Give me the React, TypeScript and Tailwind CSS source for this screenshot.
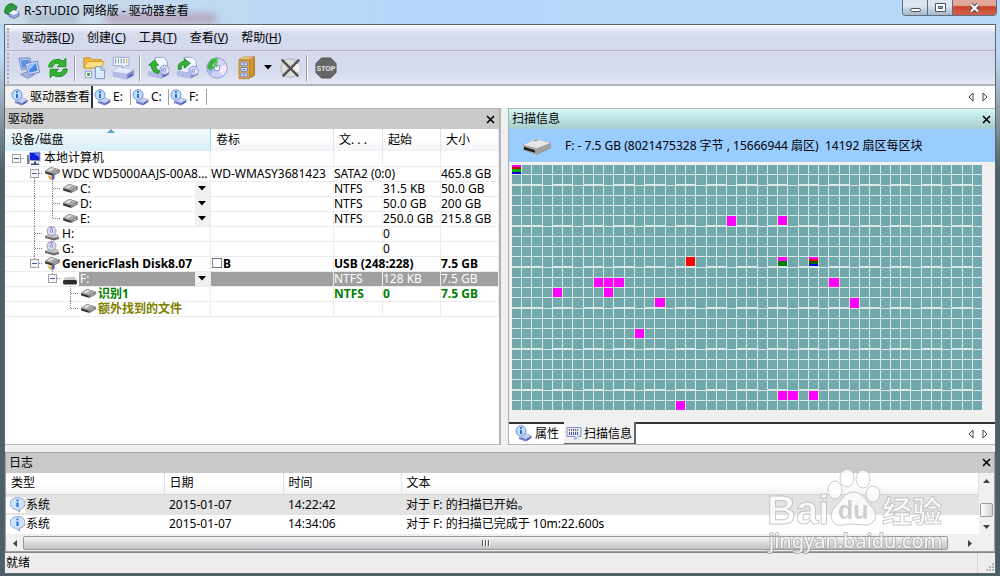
import React from "react";

interface TreeRow {
  /** 每一级的连线：空格 / | / T / L / - (展开按钮) */
  guides: string;
  icon: "pc" | "hdd" | "disk" | "cd" | "flash";
  name: string;
  label?: string;
  fs?: string;
  start?: string;
  size?: string;
  wide?: boolean;
  menu?: boolean;
  selected?: boolean;
  style?: string;
}

const rows: TreeRow[] = [
  { guides: "-", icon: "pc", name: "本地计算机" },
  { guides: " +", icon: "hdd", name: "WDC WD5000AAJS-00A8...", label: "WD-WMASY3681423", fs: "SATA2 (0:0)", size: "465.8 GB", wide: true },
  { guides: " |T", icon: "disk", name: "C:", fs: "NTFS", start: "31.5 KB", size: "50.0 GB", menu: true },
  { guides: " |T", icon: "disk", name: "D:", fs: "NTFS", start: "50.0 GB", size: "200 GB", menu: true },
  { guides: " |L", icon: "disk", name: "E:", fs: "NTFS", start: "250.0 GB", size: "215.8 GB", menu: true },
  { guides: " T", icon: "cd", name: "H:", start: "0" },
  { guides: " T", icon: "cd", name: "G:", start: "0" },
  { guides: " ^", icon: "hdd", name: "GenericFlash Disk8.07", label: "□B", fs: "USB (248:228)", size: "7.5 GB", wide: true, style: "font-bold" },
  { guides: "  ^", icon: "flash", name: "F:", fs: "NTFS", start: "128 KB", size: "7.5 GB", menu: true, selected: true },
  { guides: "   T", icon: "disk", name: "识别1", fs: "NTFS", start: "0", size: "7.5 GB", style: "font-bold text-[#008000]" },
  { guides: "   L", icon: "disk", name: "额外找到的文件", style: "font-bold text-[#808000]" },
];

const logs = [
  { type: "系统", date: "2015-01-07", time: "14:22:42", text: "对于 F: 的扫描已开始。" },
  { type: "系统", date: "2015-01-07", time: "14:34:06", text: "对于 F: 的扫描已完成于 10m:22.600s" },
];

const COLS = 46;
const ROWS = 24;

/** 扫描到的区块，key 为 "列,行" */
const blocks: Record<string, string> = {
  "0,0": "bg-[linear-gradient(#ff00ff_0_22%,#c01000_22%_42%,#00b000_42%_78%,#0000e0_78%)]",
  "17,9": "bg-[#ff0000]",
  "26,9": "bg-[linear-gradient(#ff00ff_0_50%,#008000_50%)]",
  "29,9": "bg-[linear-gradient(#ff00ff_0_22%,#ff0000_22%_50%,#006000_50%_76%,#0000ff_76%)]",
};
["21,5", "26,5", "8,11", "9,11", "10,11", "31,11", "4,12", "9,12", "14,13", "33,13", "12,16", "26,22", "27,22", "29,22", "16,23"].forEach((key) => {
  blocks[key] = "bg-[#ff00ff]";
});

const Guide = ({ kind }: { kind: string }) => {
  const box = "-+^".includes(kind);
  const up = "|TL^".includes(kind);
  const down = "|T+".includes(kind);
  return (
    <svg width="18" height="15" viewBox="0 0 18 15" className="shrink-0" shapeRendering="crispEdges">
      <g stroke="#808080" strokeDasharray="1 1">
        {up && <path d="M9.500 0v8" />}
        {down && <path d="M9.500 8v7" />}
        {"TL".includes(kind) && <path d="M10 7.500h8" />}
        {box && <path d="M14 7.500h4" />}
      </g>
      {box && (
        <>
          <rect x="5.500" y="3.500" width="8" height="8" fill="#f6f6f6" stroke="#a0a0a0" />
          <path d="M7 7.500h5" stroke="#3c5cb0" />
        </>
      )}
    </svg>
  );
};

const DiskShape = () => (
  <>
    <path d="M1 8 7 4 15.500 6.500v3L9 13 1 10.500z" fill="#5a5a5a" />
    <path d="M1 8 7 4l8.500 2.500L9 10.500z" fill="#a8a8a8" />
    <path d="M3.500 7.500 7.500 5 10 5.800 6 8.300z" fill="#e6e6e6" />
    <path d="M2 9.600 8 11.600" stroke="#222" />
    <path d="M9 10.500V13l6.500-3.500v-3z" fill="#7c7c7c" />
    <path d="M10.500 10.700 14 8.700" stroke="#d8d8d8" strokeWidth=".8" />
  </>
);

const RowIcon = ({ kind }: { kind: TreeRow["icon"] }) => (
  <svg width="18" height="15" viewBox="0 0 16 15" className="shrink-0">
    {kind === "pc" && (
      <>
        <path d="M1 4h2.500v9H1z" fill="#777f8c" />
        <path d="M3.500 1.500 14 1v9L3.500 9.500z" fill="#1022d8" stroke="#a8b0c8" />
        <path d="M8 2.500 13 2v4z" fill="#6d8cff" />
        <path d="M8 10.500h2v2h3v1.500H5v-1.500h3z" fill="#3d4f6b" />
      </>
    )}
    {kind === "hdd" && (
      <>
        <g transform="translate(0 -3)"><DiskShape /></g>
        <path d="M3.500 9 7 10.500V14L5 12.500z" fill="#e8b923" />
        <path d="M7.500 10 10.500 8.500V13l-3 1.500z" fill="#5560b8" />
      </>
    )}
    {kind === "disk" && <g transform="translate(0 -1)"><DiskShape /></g>}
    {kind === "cd" && (
      <>
        <path d="M1 10 5 8h8l2 3v2l-5 1.500L1 12z" fill="#6c6c6c" />
        <path d="M1 10 5 8h8l2 3-5 1z" fill="#c6c6c6" />
        <circle cx="7.500" cy="5" r="4.500" fill="#dcdcf4" stroke="#8a8aa4" strokeWidth=".8" />
        <path d="M7.500 5 6 .8l3 .2z" fill="#c48be8" />
        <circle cx="7.500" cy="5" r="1.300" fill="#fff" stroke="#6868c0" strokeWidth=".8" />
      </>
    )}
    {kind === "flash" && (
      <>
        <path d="M3 6h10l2 4H1z" fill="#c9c9c9" />
        <rect x="1" y="9" width="14" height="4.500" rx="1.500" fill="#2c2c2c" />
      </>
    )}
  </svg>
);

const InfoDisk = () => (
  <svg width="17" height="17" viewBox="0 0 17 17" className="shrink-0">
    <path d="M4 11.500 9 7.500l7.500 3V13L11 16.500 4 14z" fill="#7481c4" />
    <path d="M4 11.500 9 7.500l7.500 3L11 14z" fill="#c6cdf0" />
    <path d="M12 15 15.500 12.800" stroke="#4050a0" />
    <circle cx="6" cy="5.800" r="5" fill="#bfdffb" stroke="#6f8ed0" />
    <path d="M4 10.500 5 13l2.500-2.500z" fill="#b3cdf0" />
    <path d="M6 5v4M6 2.300v1.600" stroke="#1d62c8" strokeWidth="1.800" />
  </svg>
);

const InfoBubble = () => (
  <svg width="15" height="16" viewBox="0 0 15 16" className="shrink-0">
    <path d="M7.500.7a6.500 5.800 0 0 1 2 11.600L9.500 15 6 12.400A6.500 5.800 0 0 1 7.500.7z" fill="#cde4fc" stroke="#8c9ed4" />
    <path d="M7.500 5.500v4.500M7.500 2.500v1.800" stroke="#1c68d4" strokeWidth="2" />
  </svg>
);

const ScanIcon = () => (
  <svg width="16" height="15" viewBox="0 0 16 15" className="shrink-0">
    <path d="M1 1.500h14v9h-3l-3 3v-3H1z" fill="#e4e9fa" stroke="#8090cc" />
    <path d="M3.500 3v2M9.500 3v2" stroke="#d04040" />
    <path d="M5.500 3v2M11.500 3v2" stroke="#40a040" />
    <path d="M7.500 3v2M3.500 6v3M5.500 6v3M7.500 6v3M9.500 6v3M11.500 6v3" stroke="#4a5a90" />
  </svg>
);

const Drive = () => (
  <>
    <path d="M1 16 7 11l17 3v6l-8 4.500L1 21z" fill="#8290cf" />
    <path d="M1 16 7 11l17 3-8 4.500z" fill="#e4e8fa" />
    <path d="M1 16v5l15 3.500v-6z" fill="#b4bdea" />
    <path d="M18 21.500l4-2.200" stroke="#3f4f9e" strokeWidth="1.500" />
  </>
);

const Disc = ({ cx, cy, r }: { cx: number; cy: number; r: number }) => (
  <>
    <circle cx={cx} cy={cy} r={r} fill="#cfd3f5" stroke="#8d96cf" />
    <path d={`M${cx} ${cy}L${cx + r * 0.9} ${cy - r * 0.3}A${r} ${r} 0 0 1 ${cx + r * 0.6} ${cy + r * 0.7}z`} fill="#f2e9ff" />
    <path d={`M${cx} ${cy}L${cx - r * 0.9} ${cy - r * 0.3}A${r} ${r} 0 0 0 ${cx - r * 0.6} ${cy + r * 0.7}z`} fill="#a9bdf2" />
    <circle cx={cx} cy={cy} r={r * 0.28} fill="#fff" stroke="#7680c4" />
  </>
);

const tools: { name: string; art: React.ReactNode }[] = [
  {
    name: "连接到远程",
    art: (
      <>
        <path d="M2 2.500 14 2l2 11-11 2z" fill="#b9c6ea" stroke="#7284bd" />
        <path d="M4 4.500 13 4l1.300 7.500-8.300 1.500z" fill="#5d92e8" />
        <path d="M4 20l7-3 8 3-7 4z" fill="#aab6e0" stroke="#7482bd" />
        <path d="M9 8.500 22 5.500l2.500 12-12 3z" fill="#d3dcf6" stroke="#6e80bd" />
        <path d="M11 10l9.500-2.200 1.800 8.200-8.800 2.200z" fill="#4585e4" />
        <path d="M11 10l9.500-2.200L13 15.500z" fill="#9cc6fb" />
      </>
    ),
  },
  {
    name: "刷新",
    art: (
      <>
        <path d="M3 12A9.500 8.500 0 0 1 18.500 5.500L21.500 2.500v9h-9l3-3A5.500 5 0 0 0 7 12z" fill="#35b535" stroke="#138a13" />
        <path d="M23 14A9.500 8.500 0 0 1 7.500 20.500L4.500 23.500v-9h9l-3 3a5.500 5 0 0 0 8.500-3.500z" fill="#35b535" stroke="#138a13" />
      </>
    ),
  },
  {
    name: "打开驱动器文件",
    art: (
      <>
        <path d="M2 2h7l2 2h10v9H2z" fill="#f1b93c" stroke="#c98d1a" />
        <path d="M2 13 6 6h18l-3 7z" fill="#ffe08a" stroke="#d49c28" />
        <path d="M3.500 16.500h7v7h-7z" fill="#fff" stroke="#8c98b8" />
        <path d="M5.500 18.500h3v3h-3z" fill="#2c9a3c" />
        <path d="M14.500 11.500h6l4 4v9h-10z" fill="#dceafd" stroke="#6e92cc" />
        <path d="M20.500 11.500v4h4z" fill="#fff" stroke="#6e92cc" />
      </>
    ),
  },
  {
    name: "扫描",
    art: (
      <>
        <g transform="translate(1 1)"><Drive /></g>
        <path d="M2.500 1.500h17v9h-4l-3 3v-3h-10z" fill="#f3f5fd" stroke="#9aa4c8" />
        <path d="M5 3v5M11 3v5" stroke="#6a7ab0" />
        <path d="M8 3v5M14 3v5" stroke="#54a06c" />
        <path d="M17 3v5" stroke="#c4a050" />
      </>
    ),
  },
  {
    name: "创建镜像",
    art: (
      <>
        <path d="M9 1.500h9l4 4V14H9z" fill="#f3f7ff" stroke="#93a4cf" />
        <Drive />
        <Disc cx={19} cy={15} r={5} />
        <path d="M2 10 8 4.500l4.500 5.500H9.500c0 3 1 5 4 6l-1 3C7 18 4.500 15 5 10z" fill="#38b538" stroke="#118511" />
      </>
    ),
  },
  {
    name: "打开镜像",
    art: (
      <>
        <path d="M9 1.500h9l4 4V14H9z" fill="#f3f7ff" stroke="#93a4cf" />
        <Drive />
        <Disc cx={19} cy={16} r={5} />
        <path d="M3 15C1 9 5 6 9 6V3l6.500 5L9 13v-3.500C6.500 9.500 4.500 11 6 14z" fill="#38b538" stroke="#118511" />
      </>
    ),
  },
  {
    name: "创建光盘",
    art: (
      <>
        <Disc cx={13} cy={13} r={11} />
        <path d="M13 13 5 5.500A11 11 0 0 1 14 2z" fill="#5cc45c" />
        <path d="M3 11C4 6 8 3 12 3l-1.500 3.500C8.500 7.500 8 9 8 11h2.500L6 16l-5-5z" fill="#3cb03c" />
      </>
    ),
  },
  {
    name: "区域",
    art: (
      <>
        <path d="M8 3 22 1v20l-6 3z" fill="#d09532" stroke="#9b6a18" />
        <path d="M5 4h11l6-3H10z" fill="#f3cf84" stroke="#b17c23" strokeWidth=".6" />
        <path d="M5.500 4.500h11v20h-11z" fill="#eab557" stroke="#b17c23" />
        <path d="M7.500 6.500h7v4h-7zM7.500 12.500h7v4h-7zM7.500 18.500h7v4h-7z" fill="#dfe6fb" stroke="#6b7cb8" />
        <path d="M9.500 8.500h3M9.500 14.500h3M9.500 20.500h3" stroke="#4a5aa4" />
      </>
    ),
  },
];

const Close = () => (
  <button aria-label="关闭" className="flex h-4 w-4 items-center justify-center">
    <svg width="9" height="9" viewBox="0 0 9 9"><path d="M1 1l7 7M8 1 1 8" stroke="#000" strokeWidth="1.600" /></svg>
  </button>
);

const TabArrows = () => (
  <div className="ml-auto flex items-center gap-1 pr-[5px]">
    <button aria-label="上一个"><svg width="10" height="10" viewBox="0 0 10 10"><path d="M7 1v8L3 5z" fill="none" stroke="#444" /></svg></button>
    <button aria-label="下一个"><svg width="10" height="10" viewBox="0 0 10 10"><path d="M3 1v8l4-4z" fill="none" stroke="#444" /></svg></button>
  </div>
);

const Caret = () => <svg width="8" height="5" viewBox="0 0 8 5"><path d="M0 0h8L4 4.500z" fill="#000" /></svg>;

const Separator = () => <span className="mr-[3px] ml-[2px] h-[26px] w-[2px] border-l border-[#9a9eb0] bg-white" />;

const headCell = "border-r border-[#dfe3e8] px-[5px] text-left font-normal";

const Watermark = () => (
  <svg width="190" height="100" viewBox="0 0 190 100" className="pointer-events-none absolute right-[50px] bottom-4 opacity-80" aria-hidden="true">
    <g fill="#fff" stroke="#bcbcbc" strokeWidth="1">
      <ellipse cx="75" cy="30" rx="7" ry="9" />
      <ellipse cx="87" cy="18" rx="7" ry="9" />
      <ellipse cx="103" cy="19" rx="7" ry="9" />
      <ellipse cx="113" cy="34" rx="7" ry="8" />
      <path d="M94 32c8 0 11 8 17 14 8 8 5 19-6 19-6 0-16-2-22 0-12 2-15-10-8-18 6-6 10-15 19-15z" />
      <g className="font-['Liberation_Sans','Noto_Sans_CJK_SC',sans-serif] font-bold">
        <text x="7" y="64" fontSize="40">Bai</text>
        <text x="122" y="62" fontSize="30">经验</text>
      </g>
    </g>
    <text x="78" y="59" fontSize="25" fill="#c8c8c8" className="font-['Liberation_Sans',sans-serif] font-bold">du</text>
    <text x="9" y="88" fontSize="20" fill="#fff" stroke="#a8a8a8" strokeWidth="2" paintOrder="stroke" className="font-['Noto_Sans',sans-serif]">jingyan.baidu.com</text>
  </svg>
);

const DriveTable = () => (
  <table className="w-full table-fixed border-collapse">
    <colgroup>
      <col />
      <col className="w-[123px]" />
      <col className="w-[49px]" />
      <col className="w-[58px]" />
      <col className="w-[58px]" />
    </colgroup>
    <thead>
      <tr className="h-[22px] bg-linear-to-b from-white from-50% to-[#f1f3f6]">
        <th className="relative border-r border-[#a5dcf2] bg-linear-to-b from-[#f2f9fc] to-[#d9eef7] px-[6px] text-left font-normal">
          设备/磁盘
          <svg width="8" height="4" viewBox="0 0 8 4" className="absolute top-0 left-1/2"><path d="M0 4 4 0l4 4z" fill="#5d9fc4" /></svg>
        </th>
        <th className={headCell}>卷标</th>
        <th className={headCell}>文. . .</th>
        <th className={headCell}>起始</th>
        <th className={headCell}>大小</th>
      </tr>
    </thead>
    <tbody>
      {rows.map((row, index) => {
        const cell = `whitespace-nowrap border-r border-b border-[#ececec] p-0 ${row.selected ? "bg-[#a0a0a0] text-white" : ""}`;
        return (
          <tr key={index} className={`h-[15px] leading-[14px] ${row.style ?? ""}`}>
            <td className="border-r border-b border-[#ececec] p-0">
              <div className="flex h-[14px] items-center pl-[2px]">
                {row.guides.split("").map((kind, i) => <Guide key={i} kind={kind} />)}
                <RowIcon kind={row.icon} />
                <span className={`min-w-0 flex-1 whitespace-nowrap pl-px ${row.selected ? "bg-[#a0a0a0] text-white" : ""}`}>{row.name}</span>
                {row.menu && (
                  <button aria-label={`${row.name} 菜单`} className="flex h-[14px] w-[15px] items-center justify-center bg-[#f0f0f0]"><Caret /></button>
                )}
              </div>
            </td>
            <td className={cell}>{row.label}</td>
            <td className={cell} colSpan={row.wide ? 2 : 1}>{row.fs}</td>
            {!row.wide && <td className={cell}>{row.start}</td>}
            <td className={cell}>{row.size}</td>
          </tr>
        );
      })}
    </tbody>
  </table>
);

const ScanMap = () => (
  <div className="grid grid-cols-[repeat(46,minmax(0,1fr))] gap-px bg-[#dbe8e8]">
    {Array.from({ length: COLS * ROWS }, (_, i) => {
      const key = `${i % COLS},${Math.floor(i / COLS)}`;
      return <span key={key} className={`aspect-square ${blocks[key] ?? "bg-[#71a9ac]"}`} />;
    })}
  </div>
);

const LogPanel = () => (
  <section className="border border-[#a0a0a0] bg-white">
    <header className="flex h-5 items-center justify-between bg-[#cacaca] pl-[3px]">
      <h2>日志</h2>
      <Close />
    </header>
    <div className="flex">
      <table className="flex-1 table-fixed border-collapse">
        <colgroup>
          <col className="w-[158px]" />
          <col className="w-[119px]" />
          <col className="w-[118px]" />
          <col />
        </colgroup>
        <thead>
          <tr className="h-[22px] border-b border-[#d5d5d5] bg-linear-to-b from-white from-50% to-[#f1f3f6]">
            <th className={headCell}>类型</th>
            <th className={headCell}>日期</th>
            <th className={headCell}>时间</th>
            <th className={headCell}>文本</th>
          </tr>
        </thead>
        <tbody>
          {logs.map((log, index) => (
            <tr key={index} className={`h-[20px] ${index === 0 ? "bg-[#e3e3e3]" : "border-b border-[#ececec]"}`}>
              <td className="p-0"><div className="flex items-center gap-px"><span className="bg-white pl-1"><InfoBubble /></span>{log.type}</div></td>
              <td className="px-[5px] py-0">{log.date}</td>
              <td className="px-[5px] py-0">{log.time}</td>
              <td className="px-[5px] py-0">{log.text}</td>
            </tr>
          ))}
        </tbody>
      </table>
      <div className="flex w-[15px] flex-col items-center justify-between bg-[#f0f0f0]">
        <button aria-label="向上" className="flex h-4 items-center"><svg width="7" height="4" viewBox="0 0 7 4"><path d="M0 4 3.500 0 7 4z" fill="#444" /></svg></button>
        <span className="mt-3 h-[14px] w-[13px] rounded-xs border border-[#999] bg-linear-to-r from-white to-[#d2d2d8]" />
        <button aria-label="向下" className="flex h-4 items-center"><svg width="7" height="4" viewBox="0 0 7 4"><path d="M0 0h7L3.500 4z" fill="#444" /></svg></button>
      </div>
    </div>
    <div className="flex h-4 items-center bg-[#f0f0f0]">
      <button aria-label="向左" className="flex w-[17px] justify-center"><svg width="4" height="7" viewBox="0 0 4 7"><path d="M4 0v7L0 3.500z" fill="#444" /></svg></button>
      <span className="flex h-[14px] flex-1 items-center justify-center gap-px rounded-xs border border-[#999] bg-linear-to-b from-[#f4f4f4] via-[#dadadc] to-[#c2c2c8]">
        <i className="h-[6px] w-[2px] border-r border-white bg-[#555]" />
        <i className="h-[6px] w-[2px] border-r border-white bg-[#555]" />
        <i className="h-[6px] w-[2px] border-r border-white bg-[#555]" />
      </span>
      <button aria-label="向右" className="mr-[15px] flex w-[31px] justify-center pl-3"><svg width="4" height="7" viewBox="0 0 4 7"><path d="M0 0v7l4-3.500z" fill="#444" /></svg></button>
    </div>
  </section>
);

const App: React.FC = () => {
  return (
    <div className="relative flex min-h-screen flex-col bg-linear-to-b from-[#bcd8f2] from-10% via-[#8d9aa5] via-20% to-[#4d5f68] to-30% px-1 pb-[2px] font-['Noto_Sans','Noto_Sans_CJK_SC',sans-serif] text-[12px] leading-4 text-black">
      <header className="relative -mx-1 flex h-6 items-start overflow-hidden bg-linear-to-r from-[#cddbe8] via-[#b5d8fa] via-40% to-[#b9dafa]">
        <span className="absolute top-[15px] left-[106px] h-[7px] w-[110px] bg-[#a03050]/45 blur-xs" />
        <span className="absolute top-[15px] left-[28px] h-[7px] w-[50px] bg-[#405060]/30 blur-xs" />
        <div className="relative flex items-center gap-1 pt-[3px] pl-1">
          <svg width="16" height="16" viewBox="0 0 16 16">
            <path d="M1 10C0 4 4 0 9 1l4 3-2 4-6 4z" fill="#2c9c3a" stroke="#176b22" />
            <path d="M5 10 10 7l5 2v4l-5 2.500-5-2z" fill="#8fa9dc" stroke="#50659c" strokeWidth=".7" />
            <path d="M5 10 10 7l5 2-5 3z" fill="#f2f6ff" />
          </svg>
          <h1>R-STUDIO 网络版 - 驱动器查看</h1>
        </div>
        <div className="relative mr-[3px] ml-auto flex h-4 overflow-hidden rounded-b-sm border border-t-0 border-[#5d6f83]">
          <button aria-label="最小化" className="flex w-[25px] items-center justify-center border-r border-[#5d6f83] bg-linear-to-b from-[#dbe6f0] from-40% to-[#a5b7c9]">
            <span className="mt-1 h-[4px] w-[11px] rounded-xs border border-[#4c5560] bg-white" />
          </button>
          <button aria-label="最大化" className="flex w-[25px] items-center justify-center border-r border-[#5d6f83] bg-linear-to-b from-[#dbe6f0] from-40% to-[#a5b7c9]">
            <svg width="11" height="9" viewBox="0 0 11 9"><path d="M.5.5h10v8H.5z" fill="#fff" stroke="#4c5560" /><path d="M3.500 3.500h4v2h-4z" fill="#a5b7c9" stroke="#4c5560" /></svg>
          </button>
          <button aria-label="关闭窗口" className="flex w-[43px] items-center justify-center bg-linear-to-b from-[#e2a79b] from-35% via-[#c9432c] via-45% to-[#d0614a]">
            <svg width="11" height="10" viewBox="0 0 11 10"><path d="M2 1.500l7 7M9 1.500l-7 7" stroke="#54424a" strokeWidth="4" /><path d="M2 1.500l7 7M9 1.500l-7 7" stroke="#fff" strokeWidth="2.200" /></svg>
          </button>
        </div>
      </header>

      <div className="flex flex-1 flex-col border border-[#5a6670] bg-[#f0f0f0]">
        <nav className="flex h-[26px] items-center gap-px border-b border-[#b4b4b8] bg-linear-to-b from-white to-[#d5daed] to-35% pl-[2px]">
          <span className="mr-[5px] h-[20px] w-[3px] border-l-2 border-dotted border-[#a4a8b8]" />
          {[["驱动器", "D"], ["创建", "C"], ["工具", "T"], ["查看", "V"], ["帮助", "H"]].map(([name, key]) => (
            <button key={key} className="px-[6px]">{name}(<u>{key}</u>)</button>
          ))}
        </nav>

        <div className="flex h-[35px] items-center border-b-2 border-[#b0b4be] bg-linear-to-b from-[#d5daed] from-60% to-[#e4e8f5] pl-[2px]">
          <span className="mr-1 h-[30px] w-[3px] border-l-2 border-dotted border-[#a4a8b8]" />
          {tools.map((tool, index) => (
            <React.Fragment key={tool.name}>
              {(index === 2 || index === 4) && <Separator />}
              <button aria-label={tool.name} className="flex w-[29px] justify-center">
                <svg width="24" height="24" viewBox="0 0 26 26">{tool.art}</svg>
              </button>
            </React.Fragment>
          ))}
          <button aria-label="区域菜单" className="flex w-[15px] justify-center"><Caret /></button>
          <button aria-label="移除" className="flex w-[29px] justify-center">
            <svg width="24" height="24" viewBox="0 0 26 26">
              <circle cx="13" cy="13" r="10" fill="#dedede" stroke="#b0b0b0" />
              <path d="M13 13 22 8a10 10 0 0 1 0 10z" fill="#f4f4f4" />
              <circle cx="13" cy="13" r="3" fill="#f6f6f6" stroke="#c4c4c4" />
              <path d="M4 4l18 18M23 4 5 22" stroke="#505050" strokeWidth="2.600" />
            </svg>
          </button>
          <Separator />
          <button aria-label="停止" className="flex w-[29px] justify-center">
            <svg width="22" height="22" viewBox="0 0 22 22">
              <path d="M6.500 1h9L21 6.500v9L15.500 21h-9L1 15.500v-9z" fill="#666" stroke="#505050" />
              <text x="11" y="14" fontSize="7" textAnchor="middle" fill="#e8e8e8" className="font-['Liberation_Sans',sans-serif] font-bold">STOP</text>
            </svg>
          </button>
        </div>

        <div className="flex h-[22px] items-stretch bg-white">
          <button className="flex items-center gap-[2px] border-r-2 border-[#333] bg-[#f0f0f0] pr-px pl-[6px]"><InfoDisk />驱动器查看</button>
          {["E:", "C:", "F:"].map((drive) => (
            <button key={drive} className="my-[3px] flex w-[38px] items-center gap-[2px] border-r border-[#a0a0a0] pl-px"><InfoDisk />{drive}</button>
          ))}
          <TabArrows />
        </div>

        <main className="grid flex-1 grid-cols-[497fr_488fr] gap-[7px]">
          <section className="min-w-0 border-t border-r-2 border-b border-[#b4b4b4] bg-white">
            <header className="flex h-5 items-center justify-between bg-[#cacaca] pl-[3px]">
              <h2>驱动器</h2>
              <Close />
            </header>
            <DriveTable />
          </section>

          <section className="flex min-w-0 flex-col border-t border-b border-l border-[#b0b0b0]">
            <header className="flex h-5 items-center justify-between bg-linear-to-b from-[#d2f8f8] to-[#a6cccb] pr-px pl-[3px]">
              <h2>扫描信息</h2>
              <Close />
            </header>
            <div className="flex h-[33px] items-center gap-[13px] bg-[#99ccff] pl-[13px]">
              <svg width="30" height="18" viewBox="0 0 30 18" className="shrink-0">
                <path d="M1 8 14 2l15 4v5l-14 6.500L1 13z" fill="#7a7a7a" />
                <path d="M1 8 14 2l15 4-14 5.500z" fill="#e6e6e4" />
                <path d="M1 8v5l14 4.500v-6z" fill="#a8a8a8" />
                <path d="M2 9.800l11 3.400v2.600L2 12.500z" fill="#1c1c1c" />
                <path d="M15 11.500 29 6v5l-14 6.500z" fill="#a0a0a0" />
                <path d="M12 4l4-1" stroke="#888" />
              </svg>
              <p className="whitespace-pre">F: - 7.5 GB (8021475328 字节 , 15666944 扇区)  14192 扇区每区块</p>
            </div>
            <div className="flex-1 pt-[3px] pr-[13px] pb-2 pl-[3px]">
              <ScanMap />
            </div>
            <div className="flex h-[22px] items-stretch border-t-2 border-[#333] bg-white">
              <button className="flex w-[55px] items-center gap-[3px] pl-[6px]"><InfoDisk />属性</button>
              <button className="-mt-[2px] flex items-center gap-[2px] border-r-2 border-b border-[#666] bg-[#f0f0f0] px-[2px] pt-[3px]"><ScanIcon />扫描信息</button>
              <TabArrows />
            </div>
          </section>
        </main>

        <div className="h-[7px]" />
        <LogPanel />
        <footer className="flex h-[21px] items-center border-t border-[#888] bg-[#f0eded] pl-px">
          <p>就绪</p>
          <span className="ml-auto h-full w-[18px] border-l border-[#d8d4d4]">
            <svg width="17" height="19" viewBox="0 0 17 19"><path d="M14 10h2v2h-2zM14 13h2v2h-2zM14 16h2v2h-2zM11 13h2v2h-2zM11 16h2v2h-2zM8 16h2v2H8z" fill="#b8b4b4" /></svg>
          </span>
        </footer>
      </div>

      <Watermark />
    </div>
  );
};

export default App;
